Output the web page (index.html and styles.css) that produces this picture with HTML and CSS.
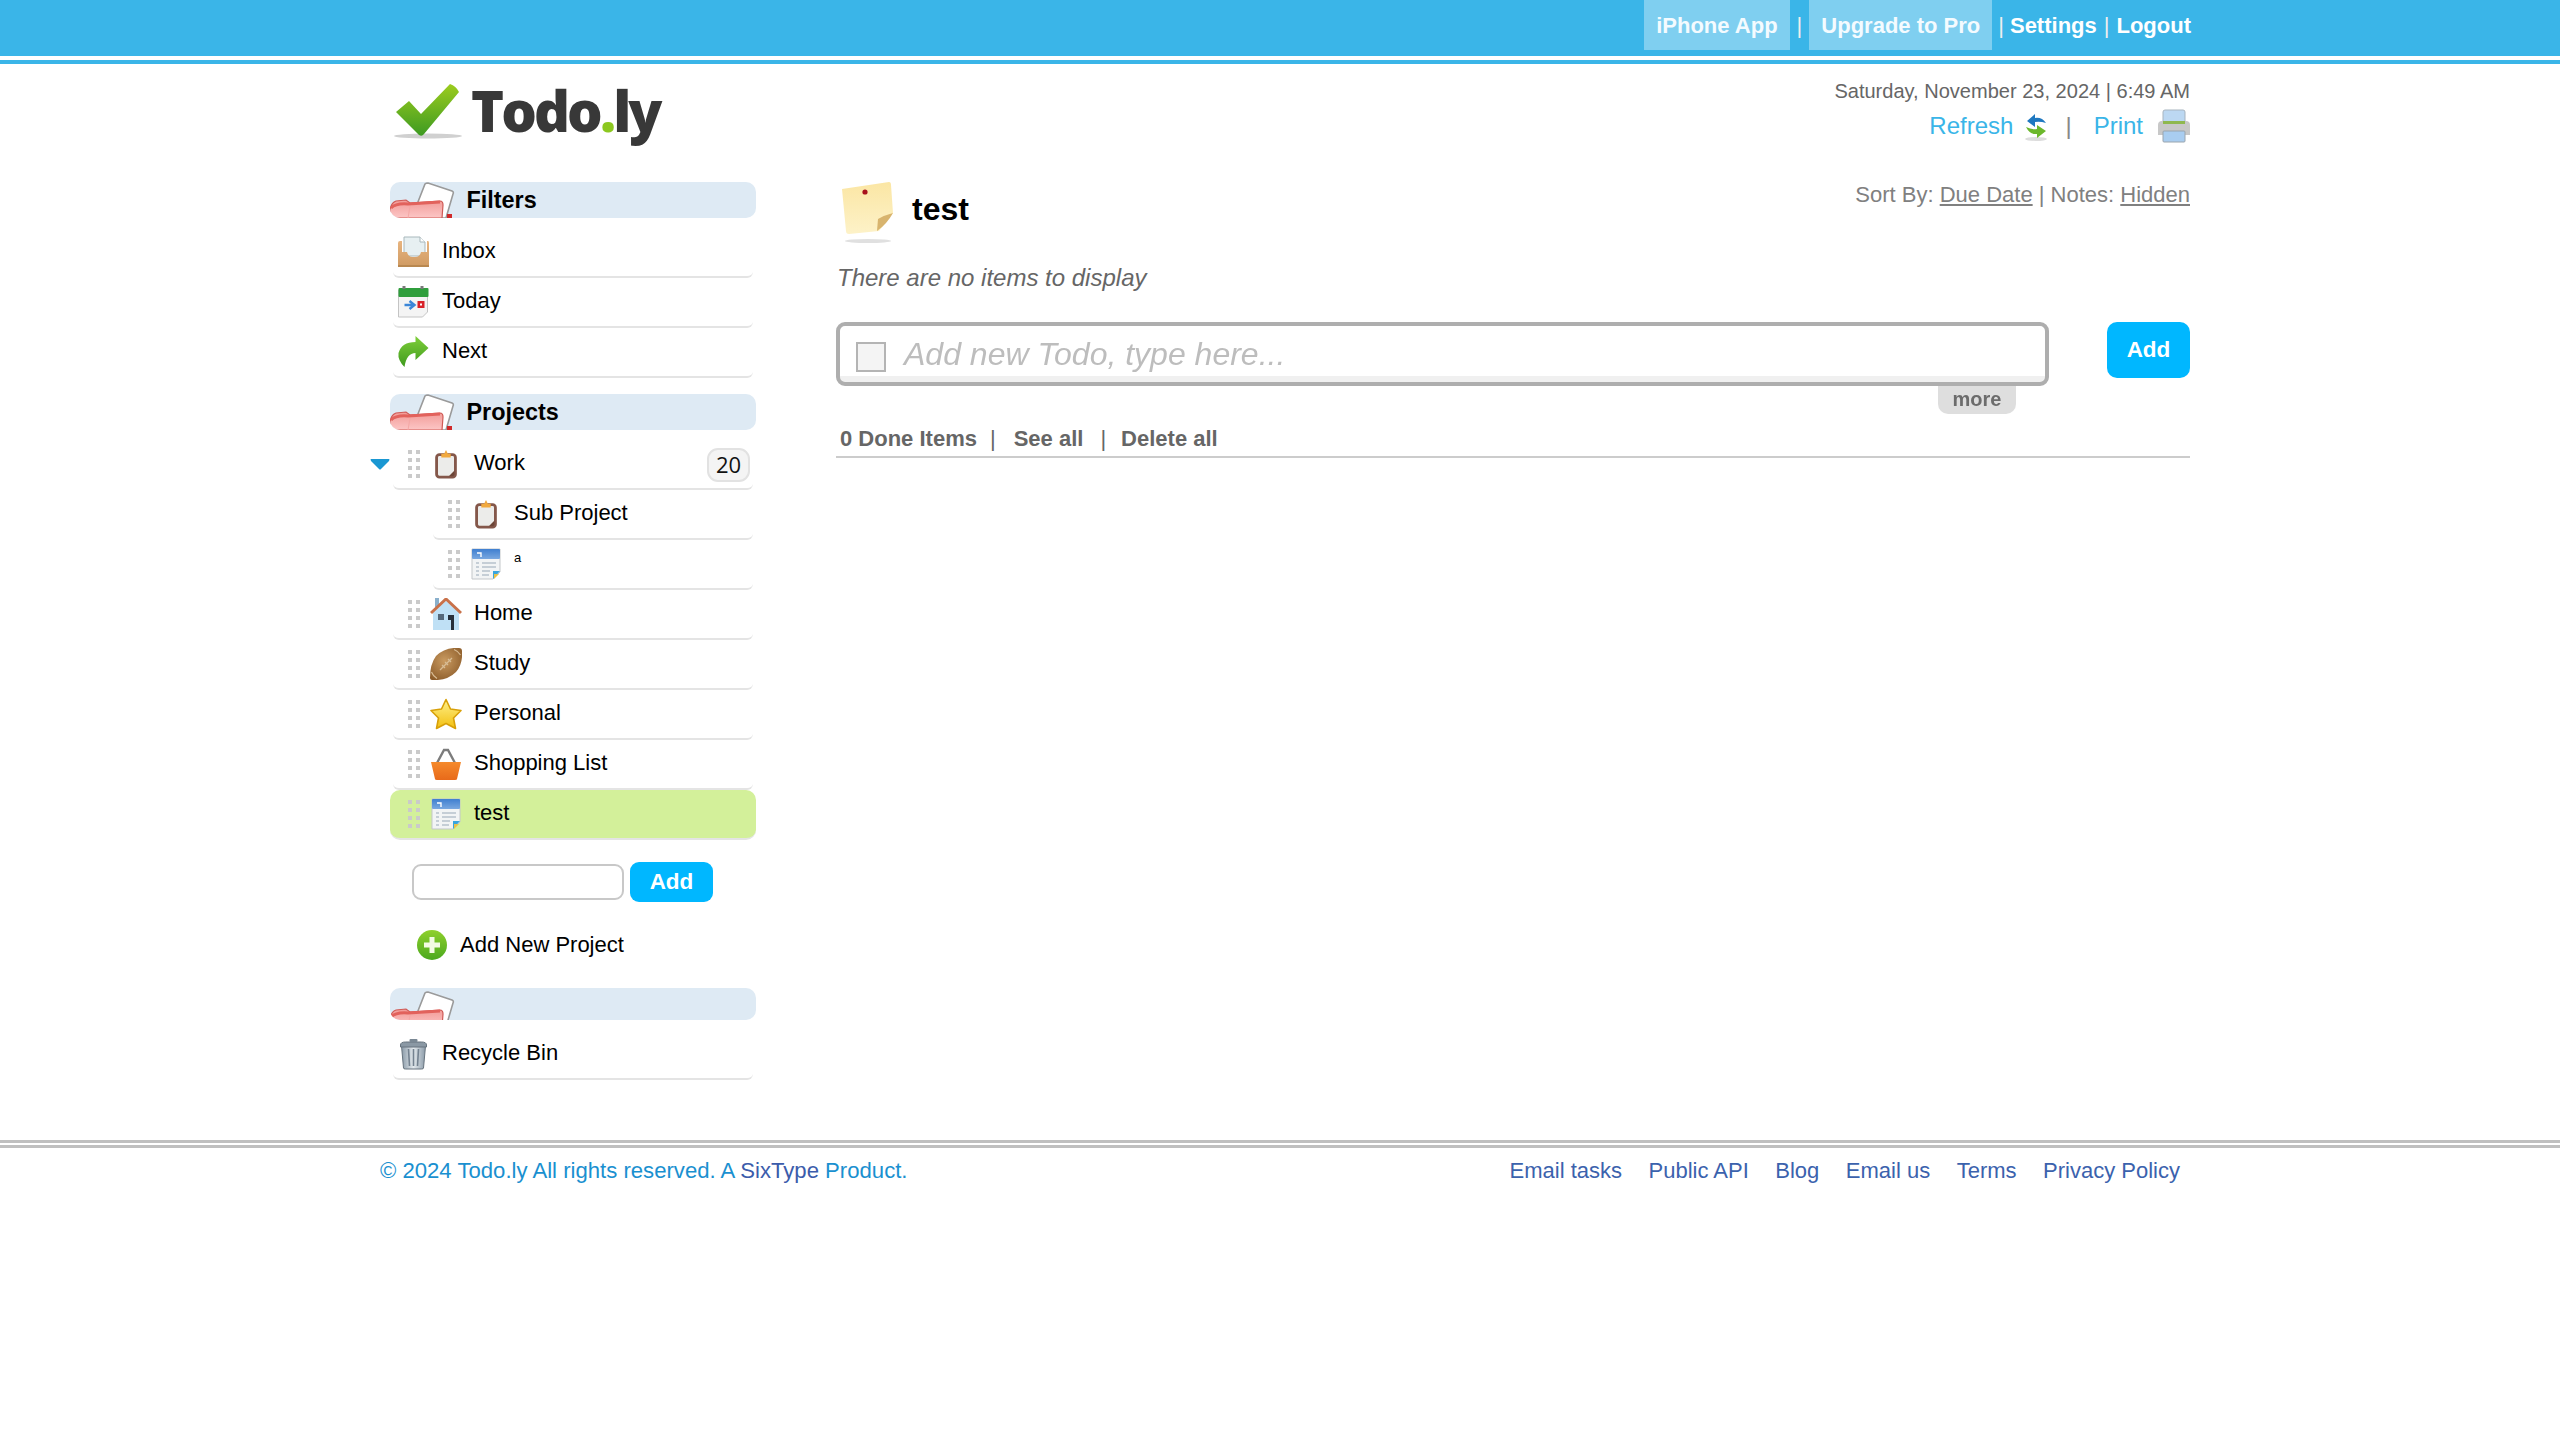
FILE: index.html
```html
<!DOCTYPE html>
<html lang="en">
<head>
<meta charset="utf-8">
<title>Todo.ly</title>
<link rel="stylesheet" href="styles.css">
</head>
<body>
<svg class="defs" width="0" height="0" aria-hidden="true">
  <defs>
    <linearGradient id="gCheck" x1="0" y1="0" x2="0" y2="1"><stop offset="0" stop-color="#9ccc1e"/><stop offset="1" stop-color="#3d9a22"/></linearGradient>
    <linearGradient id="gFolder" x1="0" y1="0" x2="0" y2="1"><stop offset="0" stop-color="#f29a96"/><stop offset="1" stop-color="#fcc6c6"/></linearGradient>
    <linearGradient id="gBox" x1="0" y1="0" x2="0" y2="1"><stop offset="0" stop-color="#e8b580"/><stop offset="1" stop-color="#cf9a62"/></linearGradient>
    <linearGradient id="gArrow" x1="0" y1="0" x2="0" y2="1"><stop offset="0" stop-color="#7fcf3a"/><stop offset="1" stop-color="#3f9a1e"/></linearGradient>
    <linearGradient id="gCal" x1="0" y1="0" x2="0" y2="1"><stop offset="0" stop-color="#3f7fd0"/><stop offset="1" stop-color="#79a8e0"/></linearGradient>
    <linearGradient id="gStar" x1="0" y1="0" x2="0" y2="1"><stop offset="0" stop-color="#fff08a"/><stop offset="1" stop-color="#f2c010"/></linearGradient>
    <linearGradient id="gBasket" x1="0" y1="0" x2="0" y2="1"><stop offset="0" stop-color="#f58a2c"/><stop offset="1" stop-color="#e86a1a"/></linearGradient>
    <linearGradient id="gNote" x1="0" y1="0" x2="0" y2="1"><stop offset="0" stop-color="#fbe6a4"/><stop offset="1" stop-color="#fdf2c8"/></linearGradient>
    <linearGradient id="gPlus" x1="0" y1="0" x2="0" y2="1"><stop offset="0" stop-color="#8fd02c"/><stop offset="1" stop-color="#4aa81e"/></linearGradient>
    <linearGradient id="gBin" x1="0" y1="0" x2="1" y2="0"><stop offset="0" stop-color="#8a9aa8"/><stop offset=".5" stop-color="#e2e8ec"/><stop offset="1" stop-color="#8a9aa8"/></linearGradient>
    <radialGradient id="gBall" cx=".45" cy=".4" r=".7"><stop offset="0" stop-color="#c99a60"/><stop offset="1" stop-color="#8a5a28"/></radialGradient>

    <symbol id="i-folder" viewBox="0 0 66 36">
      <path d="M26 25 L35 2 Q36 1 38 1 L62 9 Q64 10 63 12 L56 36 H24Z" fill="#fff" stroke="#9a9a9a" stroke-width="1.6"/>
      <path d="M0 31 Q0 21 6 19 L16 18 L20 21 L50 19 Q53 19 53 23 L52 36 H5 Q0 36 0 31Z" fill="url(#gFolder)" stroke="#cf5a55" stroke-width="1.2"/>
      <path d="M1 26 Q6 21 18 22 L50 20" fill="none" stroke="#e2625c" stroke-width="3"/>
      <path d="M20 24 L18 36" stroke="#f4a7a5" stroke-width="1"/>
      <rect x="57" y="32" width="5" height="4" fill="#d02a2a"/>
    </symbol>
    <symbol id="i-inbox" viewBox="0 0 33 32">
      <path d="M7 1 H23 L28 6 V20 H7Z" fill="#e7f0f2" stroke="#a9b8bc" stroke-width="1"/>
      <path d="M23 1 V6 H28" fill="#fff" stroke="#a9b8bc" stroke-width="1"/>
      <path d="M1 7 Q1 5 3 5 H5 V16 H10 Q11 21 16 21 H18 Q23 21 24 16 H30 V5 H31 Q32 5 32 7 V29 Q32 31 30 31 H3 Q1 31 1 29Z" fill="url(#gBox)"/>
      <rect x="1" y="29" width="31" height="2" fill="#b98850"/>
    </symbol>
    <symbol id="i-today" viewBox="0 0 32 32">
      <path d="M1 4 H30 V26 L25 31 H1Z" fill="#f4f4f4" stroke="#c4c4c4"/>
      <rect x="1" y="2" width="30" height="9" rx="1" fill="#2f9e3c"/>
      <rect x="5" y="0" width="3" height="3" fill="#7a7a7a"/><rect x="23" y="0" width="3" height="3" fill="#7a7a7a"/>
      <path d="M7 19 H15 M12 15 L17 19 L12 23" fill="none" stroke="#3b86d8" stroke-width="2.4"/>
      <rect x="20" y="15" width="7" height="7" fill="#d8232a"/><rect x="22.5" y="17.5" width="2" height="2" fill="#fff"/>
    </symbol>
    <symbol id="i-next" viewBox="0 0 32 32">
      <path d="M18 0 L31 12 L18 24 V17 Q9 17 7 31 Q0 24 1 17 Q4 6 18 6Z" fill="url(#gArrow)"/>
    </symbol>
    <symbol id="i-clip" viewBox="-5 -2 34 34">
      <rect x="2" y="5" width="20" height="24" rx="3" fill="#ececea" stroke="#84574a" stroke-width="3"/>
      <path d="M15 28 L21 22 V26 Q21 28 19 28Z" fill="#6c4436"/>
      <path d="M7 8 V4 H10 L12 0 L14 4 H17 V8Z" fill="#f1a93e"/>
    </symbol>
    <symbol id="i-sheet" viewBox="0 0 30 32">
      <path d="M1 1 H29 V24 L22 31 H1Z" fill="#f2f4f5" stroke="#c3c7ca"/>
      <rect x="1" y="1" width="28" height="10" rx="1" fill="url(#gCal)"/>
      <path d="M6 5 H10 V9" fill="none" stroke="#fff" stroke-width="1.4"/>
      <path d="M5 15 H8 M11 15 H25 M5 19 H8 M11 19 H25 M5 23 H8 M11 23 H19 M5 27 H8 M11 27 H18" stroke="#b6c1cb" stroke-width="1.4"/>
      <path d="M29 23 L22 31 V23Z" fill="#3aa5dd"/>
      <path d="M28 26 L23 31 V26Z" fill="#e9c14a"/>
    </symbol>
    <symbol id="i-home" viewBox="0 0 32 32">
      <rect x="5" y="0" width="4" height="9" fill="#8ab0cc"/>
      <path d="M3 14 L16 3 L29 14 V32 H3Z" fill="#bfe0f5"/>
      <path d="M1 15 L16 1 L31 15" fill="none" stroke="#c8714a" stroke-width="3"/>
      <rect x="8" y="16" width="6" height="6" fill="#55687a"/>
      <rect x="18" y="17" width="6" height="15" fill="#28303a"/>
      <rect x="18" y="22" width="3" height="10" fill="#bfe0f5"/>
    </symbol>
    <symbol id="i-ball" viewBox="0 0 32 32">
      <path d="M0 30 Q0 32 2 32 Q17 33 26 24 Q33 16 32 3 Q32 0 29 0 Q15 -1 6 8 Q0 16 0 30Z" fill="url(#gBall)"/>
      <path d="M10 22 L22 10" stroke="#d8bc94" stroke-width="1.3"/>
      <path d="M12 17 L15 20 M15 14 L18 17 M18 11 L21 14" stroke="#d8bc94" stroke-width="1.3"/>
      <path d="M1.5 24 Q3 28 7 30.5 M24 1.5 Q28 3 30.5 7" stroke="#d8bc94" stroke-width="1.2" fill="none"/>
    </symbol>
    <symbol id="i-star" viewBox="0 0 32 32">
      <path d="M16 1.5 L20.5 11 L31 12.5 L23.5 20 L25.5 30.5 L16 25.5 L6.5 30.5 L8.5 20 L1 12.5 L11.5 11Z" fill="url(#gStar)" stroke="#d8a008" stroke-width="1.6" stroke-linejoin="round"/>
    </symbol>
    <symbol id="i-basket" viewBox="0 0 32 32">
      <path d="M7 15 L14 2 H18 L25 15" fill="none" stroke="#7c7c7c" stroke-width="2.4"/>
      <path d="M1 14 H31 L27 31 Q27 32 25 32 H7 Q5 32 5 31Z" fill="url(#gBasket)"/>
    </symbol>
    <symbol id="i-plus" viewBox="0 0 32 32">
      <circle cx="16" cy="15" r="15" fill="url(#gPlus)"/>
      <path d="M16 7 V23 M8 15 H24" stroke="#f2fbe2" stroke-width="5"/>
    </symbol>
    <symbol id="i-bin" viewBox="0 0 32 32">
      <path d="M4 8 H28 L26 30 Q26 31 24 31 H8 Q6 31 6 30Z" fill="url(#gBin)" stroke="#66737e"/>
      <path d="M11 11 L12 28 M16 11 V28 M21 11 L20 28" stroke="#748290" stroke-width="1.6"/>
      <path d="M3 7 Q3 4 8 4 H24 Q29 4 29 7 V9 H3Z" fill="#8a98a4" stroke="#66737e"/>
      <rect x="12" y="1" width="8" height="3" rx="1" fill="#7a8894"/>
    </symbol>
  </defs>
</svg>

<header class="topbar">
  <nav class="topnav">
    <a class="tophi">iPhone App</a><span class="sep">|</span><a class="tophi">Upgrade to Pro</a><span class="sep sep-tight">|</span><a>Settings</a><span class="sep">|</span><a>Logout</a>
  </nav>
</header>
<div class="topline"></div>

<div class="page">
  <div class="head">
    <div class="logo">
      <svg class="logocheck" viewBox="0 0 68 56" aria-hidden="true">
        <ellipse cx="34" cy="52" rx="34" ry="2.5" fill="#d0d0d0"/>
        <path d="M2 28 L15 17 L27 30 L56 0 Q62 2 65 8 L30 50 Q28 53 25 51Z" fill="url(#gCheck)"/>
      </svg>
      <span class="logotext">Todo<b class="logodot">.</b>ly</span>
    </div>
    <div class="headright">
      <div class="datetime">Saturday, November 23, 2024 | 6:49 AM</div>
      <div class="actions">
        <a>Refresh</a>
        <svg class="refreshicon" viewBox="0 0 24 30" aria-hidden="true">
          <ellipse cx="12" cy="27" rx="11" ry="2" fill="#ddd"/>
          <path d="M3 9 L11 2 V6 Q18 5 22 11 Q16 9 11 10 V15Z" fill="#1f78c0"/>
          <path d="M22 19 L13 26 V22 Q6 23 2 15 Q8 18 13 17 V13Z" fill="#6cb82c"/>
        </svg>
        <span class="actsep">|</span>
        <a>Print</a>
        <svg class="printicon" viewBox="0 0 32 32" aria-hidden="true">
          <rect x="5" y="0" width="22" height="13" rx="2" fill="#bcd8f2" stroke="#a7b4bf"/>
          <path d="M0 15 Q0 11 4 11 H28 Q32 11 32 15 V25 H0Z" fill="#c8c8c8"/>
          <rect x="5" y="11" width="22" height="3" fill="#8fb84e"/>
          <rect x="5" y="21" width="22" height="11" rx="1" fill="#a9cdf0" stroke="#9aa5ae"/>
        </svg>
      </div>
    </div>
  </div>

  <div class="columns">
    <aside class="side">
      <div class="sechead"><svg class="secicon"><use href="#i-folder"/></svg><span>Filters</span></div>
      <ul class="list">
        <li class="row"><svg class="ficon"><use href="#i-inbox"/></svg><span class="ftext">Inbox</span></li>
        <li class="row"><svg class="ficon"><use href="#i-today"/></svg><span class="ftext">Today</span></li>
        <li class="row"><svg class="ficon"><use href="#i-next"/></svg><span class="ftext">Next</span></li>
      </ul>

      <div class="sechead sechead-gap"><svg class="secicon"><use href="#i-folder"/></svg><span>Projects</span></div>
      <ul class="list">
        <li class="row proj">
          <svg class="caret" viewBox="0 0 20 12" aria-hidden="true"><path d="M1 1 H19 Q20 1 19 3 L11 11 Q10 12 9 11 L1 3 Q0 1 1 1Z" fill="#1a97d2"/></svg>
          <i class="grip"></i><svg class="picon"><use href="#i-clip"/></svg><span class="ptext">Work</span><span class="count">20</span>
        </li>
        <li class="row proj sub"><i class="grip"></i><svg class="picon"><use href="#i-clip"/></svg><span class="ptext">Sub Project</span></li>
        <li class="row proj sub"><i class="grip"></i><svg class="picon"><use href="#i-sheet"/></svg><span class="ptext tiny">a</span></li>
        <li class="row proj"><i class="grip"></i><svg class="picon"><use href="#i-home"/></svg><span class="ptext">Home</span></li>
        <li class="row proj"><i class="grip"></i><svg class="picon"><use href="#i-ball"/></svg><span class="ptext">Study</span></li>
        <li class="row proj"><i class="grip"></i><svg class="picon"><use href="#i-star"/></svg><span class="ptext">Personal</span></li>
        <li class="row proj"><i class="grip"></i><svg class="picon"><use href="#i-basket"/></svg><span class="ptext">Shopping List</span></li>
        <li class="row proj active"><i class="grip"></i><svg class="picon"><use href="#i-sheet"/></svg><span class="ptext">test</span></li>
      </ul>

      <div class="addform"><span class="addinput"></span><button class="btn btn-small">Add</button></div>
      <div class="addnew"><svg class="plus"><use href="#i-plus"/></svg><span>Add New Project</span></div>

      <div class="sechead sechead-empty"><svg class="secicon"><use href="#i-folder"/></svg></div>
      <ul class="list">
        <li class="row"><svg class="ficon"><use href="#i-bin"/></svg><span class="ftext">Recycle Bin</span></li>
      </ul>
    </aside>

    <main class="main">
      <div class="titlebar">
        <div class="title">
          <svg class="noteicon" viewBox="0 0 54 62" aria-hidden="true">
            <ellipse cx="27" cy="59" rx="23" ry="2" fill="#e0e0e0"/>
            <path d="M1 7 L48 0 Q50 0 50 3 L52 31 L38 49 L8 52 Q5 52 5 49Z" fill="url(#gNote)"/>
            <path d="M52 31 Q44 33 37 37 L36 49 Q46 42 52 31Z" fill="#d8b46e"/>
            <circle cx="24" cy="10" r="2.6" fill="#a8121c"/>
          </svg>
          <h1>test</h1>
        </div>
        <div class="sort">Sort By: <a>Due Date</a> | Notes: <a>Hidden</a></div>
      </div>
      <p class="empty">There are no items to display</p>

      <div class="addrow">
        <div class="addwrap">
          <div class="todoinput"><i class="check"></i><span class="placeholder">Add new Todo, type here...</span></div>
          <div class="more"><span>more</span></div>
        </div>
        <button class="btn btn-big">Add</button>
      </div>

      <div class="done"><b class="d1">0 Done Items</b><span class="dsep">|</span><a class="dlink">See all</a><span class="dsep dsep2">|</span><a class="dlink">Delete all</a></div>
    </main>
  </div>
</div>

<footer class="footer">
  <div class="footinner">
    <div class="copy">© 2024 Todo.ly All rights reserved. A <a>SixType</a> Product.</div>
    <nav class="footlinks"><a>Email tasks</a><a>Public API</a><a>Blog</a><a>Email us</a><a>Terms</a><a>Privacy Policy</a></nav>
  </div>
</footer>
</body>
</html>
```
FILE: styles.css
```css
* { box-sizing: border-box; }
html, body { margin: 0; padding: 0; background: #fff; }
body { font-family: "Liberation Sans", Arial, sans-serif; font-size: 22px; color: #000; min-height: 1440px; }
.defs { position: absolute; }
a { color: inherit; }
ul { list-style: none; margin: 0; padding: 0; }
svg { display: block; flex: none; overflow: visible; }

.topbar { height: 56px; background: #3ab5e8; }
.topnav { width: 2191px; height: 50px; display: flex; justify-content: flex-end; align-items: flex-start; color: #fff; font-weight: bold; font-size: 22px; line-height: 52px; }
.tophi { height: 50px; padding: 0 12px; background: #7fcff0; color: #f4fbff; }
.sep { margin: 0 7px; font-weight: normal; color: #eee; }
.sep-tight { margin: 0 6px; }
.topline { height: 4px; margin-top: 4px; background: #3ab5e8; }

.page { margin-left: 380px; width: 1810px; }
.head { display: flex; justify-content: space-between; height: 118px; }
.logo { display: flex; align-items: flex-start; padding: 20px 0 0 14px; }
.logocheck { width: 68px; height: 56px; }
.logotext { font-family: "Open Sans", sans-serif; font-weight: 800; font-size: 56px; line-height: 70px; letter-spacing: -2.9px; color: #383838; margin: -9px 0 0 9px; filter: blur(.7px); }
.logodot { color: #8cc820; font-weight: 800; }
.headright { text-align: right; padding-top: 14px; }
.datetime { color: #666; font-size: 20.05px; line-height: 26px; height: 26px; }
.actions { display: flex; justify-content: flex-end; align-items: center; color: #3ab5e8; font-size: 24px; line-height: 32px; margin-top: 5px; height: 34px; }
.refreshicon { width: 24px; height: 30px; margin: 2px 0 0 11px; }
.actsep { color: #888; margin: 0 22px 0 17px; }
.printicon { width: 32px; height: 32px; margin-left: 15px; }

.columns { display: flex; align-items: flex-start; }
.side { width: 366px; margin-left: 10px; flex: none; }
.main { width: 1354px; margin-left: 80px; }

.sechead { height: 36px; background: #deeaf4; border-radius: 10px; display: flex; align-items: center; font-weight: bold; overflow: hidden; font-size: 23.4px; margin-bottom: 10px; }
.sechead-gap { margin-top: 16px; }
.sechead-empty { height: 32px; margin-top: 26px; align-items: flex-start; }
.secicon { width: 66px; height: 36px; margin-right: 10.5px; }
.sechead-empty .secicon { margin-top: 3px; }

.row { height: 50px; display: flex; align-items: flex-start; position: relative; margin: 0 3px; border-bottom: 2px solid #e4e4e4; border-radius: 0 0 6px 6px; }
.ficon { width: 33px; height: 32px; margin: 8px 0 0 4px; filter: blur(.4px); }
.ftext { margin-left: 12px; line-height: 45px; }
.proj .grip { margin: 10px 0 0 15px; }
.grip { display: block; width: 12px; height: 28px; flex: none; background: repeating-linear-gradient(90deg, #cacaca 0 4px, transparent 4px 8px); -webkit-mask: repeating-linear-gradient(180deg, #000 0 4px, transparent 4px 8px); mask: repeating-linear-gradient(180deg, #000 0 4px, transparent 4px 8px); }
.picon { width: 32px; height: 32px; margin: 8px 0 0 10px; filter: blur(.4px); }
.ptext { margin-left: 12px; line-height: 45px; }
.tiny { font-size: 13px; line-height: 36px; }
.sub { margin-left: 43px; }
.proj.sub .grip { margin-left: 15px; }
.caret { position: absolute; left: -23px; top: 18px; width: 20px; height: 12px; }
.count { position: absolute; right: 3px; top: 8px; width: 43px; height: 34px; border: 2px solid #e2e2e2; border-radius: 11px; background: #f4f4f4; font-family: "Open Sans", sans-serif; font-size: 22px; line-height: 29px; text-align: center; color: #111; }
.active { margin: 0; height: 50px; background: #d3f09a; border-radius: 10px; border-bottom: 2px solid #e4e4e4; }
.proj.active .grip { margin-left: 18px; }

.addform { display: flex; align-items: center; margin: 22px 0 0 22px; gap: 6px; }
.addinput { display: block; width: 212px; height: 36px; border: 2px solid #c8c8c8; border-radius: 9px; background: #fff; }
.btn { border: 0; background: #00b7ff; color: #fff; font-family: "Liberation Sans", Arial, sans-serif; font-weight: bold; padding: 0; border-radius: 9px; }
.btn-small { width: 83px; height: 40px; font-size: 22.5px; }
.btn-big { width: 83px; height: 56px; font-size: 22.5px; border-radius: 10px; }
.addnew { display: flex; align-items: flex-start; margin: 28px 0 0 26px; height: 32px; }
.plus { width: 32px; height: 32px; filter: blur(.4px); }
.addnew span { margin-left: 12px; line-height: 30px; }

.titlebar { display: flex; justify-content: space-between; height: 64px; }
.title { display: flex; align-items: flex-start; }
.noteicon { width: 54px; height: 62px; margin-left: 5px; filter: blur(.4px); }
.title h1 { margin: 0 0 0 17px; font-size: 32px; line-height: 54px; font-weight: bold; }
.sort { color: #808080; font-size: 22px; line-height: 30px; margin-top: -2px; }
.sort a { text-decoration: underline; }
.empty { margin: 17px 0 0; padding-left: 1px; color: #666; font-style: italic; font-size: 24px; line-height: 30px; height: 59px; }
.addrow { display: flex; justify-content: space-between; align-items: flex-start; }
.addwrap { width: 1213px; position: relative; }
.todoinput { height: 64px; border: 4px solid #aeaeae; border-radius: 9px; display: flex; align-items: center; background: linear-gradient(#fff 0 50px, #f0f0f0 50px); }
.check { width: 30px; height: 30px; flex: none; margin: 5px 0 0 16px; border: 2px solid #b4b4b4; background: #f4f4f4; }
.placeholder { margin-left: 18px; color: #bdbdbd; font-style: italic; font-size: 32px; filter: blur(.6px); }
.more { position: absolute; left: 1102px; top: 64px; width: 78px; height: 28px; background: #dedede; border-radius: 0 0 10px 10px; text-align: center; color: #6c6c6c; font-weight: bold; font-size: 20px; line-height: 26px; }
.more span { display: inline-block; filter: blur(.6px); }
.done { margin-top: 34.5px; height: 37px; border-bottom: 2px solid #ccc; color: #666; font-size: 22px; line-height: 36px; padding-left: 4px; display: flex; }
.d1, .dlink { font-weight: bold; }
.dsep { margin: 0 18px 0 13px; }
.dsep2 { margin: 0 15px 0 17px; }

.footer { margin-top: 60px; border-top: 3px solid #bfbfbf; padding-top: 2px; }
.footer::before { content: ""; display: block; height: 3px; background: #bfbfbf; margin-bottom: 8px; }
.footinner { margin-left: 380px; width: 1800px; display: flex; justify-content: space-between; }
.copy { color: #1a90d0; font-size: 22.13px; line-height: 30px; }
.copy a { color: #3b5cab; }
.footlinks { display: flex; gap: 26.5px; color: #3b62ad; font-size: 22px; line-height: 30px; }
```
